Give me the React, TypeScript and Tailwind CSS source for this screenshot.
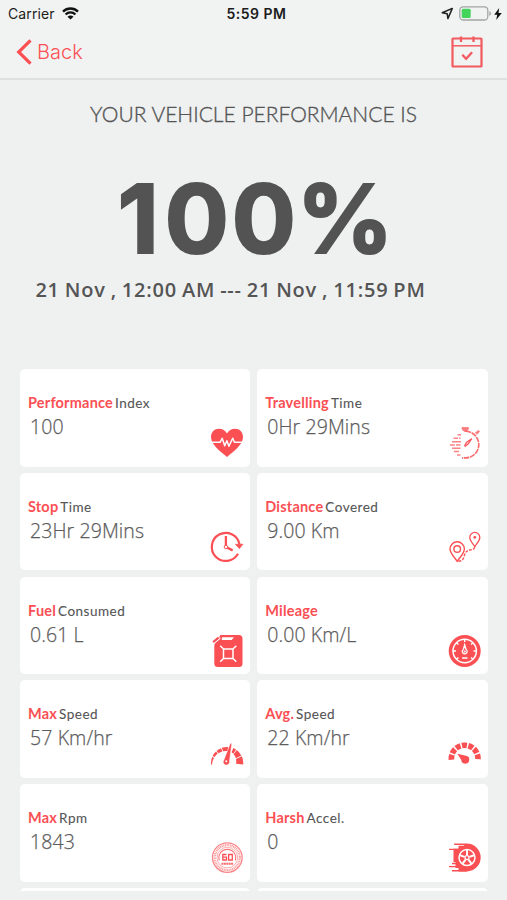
import type { ReactNode } from 'react';

const RED = '#fa5054';

function Svg({ children }: { children: ReactNode }) {
  return (
    <svg viewBox="0 0 32 32" width="32" height="32" fill="none" stroke={RED} className="overflow-visible">
      {children}
    </svg>
  );
}

const polar = (cx: number, cy: number, r: number, deg: number) => {
  const a = (deg * Math.PI) / 180;
  return `${(cx + r * Math.cos(a)).toFixed(2)} ${(cy - r * Math.sin(a)).toFixed(2)}`;
};

// Filled ring segment from angle a to angle b, with its own inner radius at each end.
const wedge = (cx: number, cy: number, ro: number, ra: number, rb: number, a: number, b: number) =>
  `M${polar(cx, cy, ro, a)}A${ro} ${ro} 0 0 1 ${polar(cx, cy, ro, b)}L${polar(cx, cy, rb, b)}A${rb} ${rb} 0 0 0 ${polar(cx, cy, ra, a)}Z`;

const HeartIcon = () => (
  <Svg>
    <path d="M16 30C10.500 25 0 18.200 0 10 0 5.200 3.400 1.800 8 1.800c3.400 0 6.400 1.800 8 4.800 1.600-3 4.600-4.800 8-4.800 4.600 0 8 3.400 8 8.200 0 8.200-10.500 15-16 20z" fill={RED} stroke="none" />
    <path d="M0 15.300h9l2.200-4 2.500 7.500 2.200-5 2 5.400 3.800-8 1.800 4.100H32" stroke="#fff" strokeWidth="1.500" strokeLinejoin="round" />
  </Svg>
);

const ClockIcon = () => (
  <Svg>
    <path d="M28.500 13A14 14 0 1 0 27 22.800" strokeWidth="2.200" />
    <path d="M24.500 13.300h7.300l-3.400 4.300z" fill={RED} strokeWidth=".8" />
    <path d="M14.900 5v11l6.800 3.400" strokeWidth="2.300" />
    <circle cx="14.900" cy="16" r="1.700" fill="#fff" strokeWidth="1" />
  </Svg>
);

const StopwatchIcon = () => (
  <Svg>
    <path d="M16.500 4.300a13.300 13.300 0 0 1 0 26.600h-3.500" strokeWidth="1.600" strokeDasharray="5.500 .8" opacity=".85" />
    <path d="M13 .5h6.400v1.600L17.500 4.300h-2.600L13 2.100zM26.500 5.600l3-2.200 1 1.400-2.700 2.500z" fill={RED} strokeWidth=".8" opacity=".75" />
    <path d="m15.600 18.700 2-3.600 5.200-3.500-3.500 5.200-3 2.500z" fill="#fbb" strokeWidth="1.100" />
    <path d="M8.500 7.700H12M4.500 11.200H9M10 11.200h1.500M3 14.700h9M.8 18h5M7 18h4.500M3 21.300h8.500M4.800 24.600H10M8 28h3.500" strokeWidth="1.500" opacity=".7" />
  </Svg>
);

const RouteIcon = () => (
  <Svg>
    <path d="M8.200 30.300C5.700 26.500 1 22.200 1 18a7.200 7.200 0 0 1 14.400 0c0 4.200-4.700 8.500-7.200 12.300z" strokeWidth="1.400" />
    <circle cx="8.200" cy="18" r="3.300" strokeWidth="1.400" />
    <path d="M25.800 15.600c-1.700-3-5-5.700-5-9.200a5 5 0 0 1 10 0c0 3.500-3.300 6.200-5 9.200z" strokeWidth="1.300" />
    <circle cx="25.800" cy="6.300" r="1.400" fill={RED} stroke="none" />
    <path d="M9.500 30.200c4-.3 4.800-2 5.500-4.500.8-3 2-6.200 5.500-6.700 2.500-.3 4.500-.4 5.200-2.800" strokeWidth="1.400" strokeDasharray="2.800 1.300" />
  </Svg>
);

const FuelIcon = () => (
  <Svg>
    <path d="m2.300 7.300 5.500-4.600" strokeWidth="2.700" />
    <path d="M9.500 0H28a3.500 3.500 0 0 1 3.500 3.500V28.500A3.500 3.500 0 0 1 28 32H6.800a3.500 3.500 0 0 1-3.500-3.500V11c0-1.600.5-2.600 1.600-3.500L8.500 4.500V1.200z" fill={RED} stroke="none" />
    <path d="m.8 10.200 8.700-7.200" stroke="#fff" strokeWidth="1" />
    <path d="M11 2.300h12l-2.400 2.800H10.700z" fill="#fff" stroke="none" />
    <path d="M12.500 14h9.500v9.500h-9.500zM12.500 14 9.200 10.700M22 14l3.300-3.300M22 23.500l3.300 3.300M12.500 23.500l-3.300 3.300" stroke="#fff" strokeWidth="1.500" />
  </Svg>
);

const MileageIcon = () => (
  <Svg>
    <circle cx="15.700" cy="16" r="16" fill={RED} stroke="none" />
    <circle cx="15.700" cy="16" r="11.700" stroke="#fff" strokeWidth="1.500" />
    <g stroke="#fff" strokeWidth="1.400">
      <path d="M15.700 4v3M4 16h3M27.500 16h-3M7.300 7.500l2.100 2.100M24.200 7.500l-2.100 2.100M7.300 24.500l2.100-2.100M24.200 24.500l-2.100-2.100M13.100 23h5.400" />
      <path d="M15.700 9.800 14.300 14.500a2.400 2.400 0 1 0 2.800 0z" fill={RED} strokeWidth="1.300" />
    </g>
    <circle cx="15.700" cy="16.600" r="1" fill="#fff" stroke="none" />
  </Svg>
);

const MaxSpeedIcon = () => (
  <Svg>
    <g fill={RED} stroke="none">
      <path d={wedge(16, 25, 16, 15, 14, 186, 158)} />
      <path d={wedge(16, 25, 16, 13.8, 13.200, 154, 134)} />
      <path d={wedge(16, 25, 16, 12.9, 12.400, 131, 112)} />
      <path d={wedge(16, 25, 16, 12.300, 12, 109, 86)} />
      <path d={wedge(16, 25, 16.200, 11.700, 11.100, 67, 56)} />
      <path d={wedge(16, 25, 16.200, 10.900, 10.100, 53, 28)} />
      <path d={wedge(16, 25, 16.300, 9.800, 9, 24, -5)} />
      <path d="m19.300 5.300 1.500.3-2.300 17.500a3.200 3.200 0 1 1-5.600-1.200z" stroke="#fff" strokeWidth=".5" />
    </g>
    <circle cx="15.300" cy="23.300" r="1" fill="#fff" stroke="none" />
  </Svg>
);

const AvgSpeedIcon = () => (
  <Svg>
    <g fill={RED} stroke="none">
      {[0, 1, 2, 3, 4, 5, 6].map((i) => (
        <path key={i} d={wedge(15.700, 20.600, 16.200, 10.500, 10.500, 185 - i * 27.700, 185 - i * 27.700 - 21.500)} />
      ))}
      <path d="m8.300 15.800 8.600 1.900a4 4 0 1 1-4.600 4.200z" />
    </g>
  </Svg>
);

const RpmIcon = () => (
  <Svg>
    <circle cx="16.300" cy="15.600" r="14.800" strokeWidth="1.300" opacity=".7" />
    <circle cx="16.300" cy="15.600" r="12.500" strokeWidth="2.200" strokeDasharray="1 .7" opacity=".6" />
    <circle cx="16.300" cy="15.600" r="10.300" strokeWidth=".8" opacity=".6" />
    <path d="M8.300 18.300a8.400 8.400 0 1 1 16 0" strokeWidth="1.100" opacity=".8" />
    <path d="M15.500 12.500h-3.700v5.500h3.700v-2.800h-3.500M17.600 12.500h3.700v5.500h-3.700z" strokeWidth="1.300" />
    <path d="M10.500 21.700h11.800" strokeWidth="2" strokeDasharray="2 .4" opacity=".85" />
  </Svg>
);

const TyreIcon = () => (
  <Svg>
    <path d="M17.800 2.200H5.200M10 7.400H0M8 21.500H3M10 24.600H0M18 28.700H3" strokeWidth="1.400" />
    <path d="M17.800 1.600a13.900 13.900 0 0 1 0 27.800H9.500v-3.500H6.500v-6H4.500V10.500H4.500V6.800h5v-3h5z" fill={RED} stroke="none" />
    <circle cx="18" cy="15.600" r="8" stroke="#fff" strokeWidth="1.500" />
    <circle cx="18" cy="15.600" r="2" stroke="#fff" strokeWidth="1.200" />
    {[90, 162, 234, 306, 18].map((a) => (
      <path key={a} d={`M${polar(18, 15.600, 2.500, a)}L${polar(18, 15.600, 7.500, a)}`} stroke="#fff" strokeWidth="2" />
    ))}
  </Svg>
);

type Metric = { strong: string; rest: string; value: string; icon: ReactNode };

const metrics: Metric[] = [
  { strong: 'Performance', rest: 'Index', value: '100', icon: <HeartIcon /> },
  { strong: 'Travelling', rest: 'Time', value: '0Hr 29Mins', icon: <StopwatchIcon /> },
  { strong: 'Stop', rest: 'Time', value: '23Hr 29Mins', icon: <ClockIcon /> },
  { strong: 'Distance', rest: 'Covered', value: '9.00 Km', icon: <RouteIcon /> },
  { strong: 'Fuel', rest: 'Consumed', value: '0.61 L', icon: <FuelIcon /> },
  { strong: 'Mileage', rest: '', value: '0.00 Km/L', icon: <MileageIcon /> },
  { strong: 'Max', rest: 'Speed', value: '57 Km/hr', icon: <MaxSpeedIcon /> },
  { strong: 'Avg.', rest: 'Speed', value: '22 Km/hr', icon: <AvgSpeedIcon /> },
  { strong: 'Max', rest: 'Rpm', value: '1843', icon: <RpmIcon /> },
  { strong: 'Harsh', rest: 'Accel.', value: '0', icon: <TyreIcon /> },
];

function Card({ strong, rest, value, icon }: Metric) {
  return (
    <div className="flex h-[97.500px] justify-between rounded-[5px] bg-white pr-[7px] pb-[7.500px] pl-2">
      <div className="pt-[24px]">
        <p className="flex items-baseline gap-[2px] font-['Lato',sans-serif] leading-5 whitespace-nowrap">
          <span className="text-[14.500px] font-bold tracking-[0.2px] text-[#fa5054]">{strong}</span>
          <span className="text-[13.500px] font-normal tracking-[0.5px] text-[#555] [-webkit-text-stroke:0.1px]">{rest}</span>
        </p>
        <p className="pl-[2px] font-['Open_Sans',sans-serif] text-[19.500px] leading-7 font-light tracking-[0.1px] text-[#5c5c5c] [-webkit-text-stroke:0.25px]">
          {value}
        </p>
      </div>
      <div className="self-end">{icon}</div>
    </div>
  );
}

function StatusBar() {
  return (
    <div className="grid h-[27px] grid-cols-3 items-center pr-[5px] pl-2 font-['Inter',sans-serif] text-[14px] text-[#1c1c1c]">
      <div className="flex items-center gap-[7px]">
        <span className="tracking-[0.1px]">Carrier</span>
        <svg width="17" height="13" viewBox="0 0 17 13" fill="none" stroke="#111" strokeWidth="2.300">
          <path d="M1 4.600a10.600 10.600 0 0 1 15 0M3.600 7.500a6.900 6.900 0 0 1 9.800 0" />
          <path d="M8.500 12.500 5.500 9.700a4.200 4.200 0 0 1 6 0z" fill="#111" stroke="none" />
        </svg>
      </div>
      <span className="pl-[3px] text-center font-semibold tracking-[0.500px] whitespace-nowrap">5:59 PM</span>
      <div className="flex items-center justify-end">
        <svg width="13" height="13" viewBox="0 0 13 13" fill="none" stroke="#222" strokeWidth="1.500" strokeLinejoin="round">
          <path d="M11.300 1.400 1.200 5.800l5 .9.700 4.900z" />
        </svg>
        <svg width="33" height="15" viewBox="0 0 33 15" fill="none" className="ml-[5px]">
          <rect x=".8" y=".8" width="28" height="13.200" rx="3.500" stroke="#a3a5a5" strokeWidth="1.300" />
          <rect x="2.700" y="2.700" width="9" height="9.400" rx="1.500" fill="#43d45b" />
          <path d="M30.300 5.200c2.200.6 2.200 3.900 0 4.500z" fill="#a3a5a5" />
        </svg>
        <svg width="8" height="12" viewBox="0 0 8 12" className="ml-[2px]">
          <path d="M5.200 0 .2 6.800h3L2.200 12 7.800 5h-3.300z" fill="#111" />
        </svg>
      </div>
    </div>
  );
}

export default function App() {
  return (
    <div className="flex h-[900px] w-[507px] flex-col overflow-hidden bg-[#eff1f1] text-[#555]">
      <header className="h-[80px] border-b-2 border-[#dfe1e1] bg-[#f1f3f3]">
        <StatusBar />
        <div className="flex h-[50px] items-center justify-between pr-6 pl-4">
          <div className="flex items-center gap-[5px]">
            <svg width="16" height="26" viewBox="0 0 16 26" fill="none" stroke="#fa5054" strokeWidth="3.200">
              <path d="M14.500 1.300 2.700 13l11.800 11.700" />
            </svg>
            <span className="font-['Inter',sans-serif] text-[20px] font-light text-[#fa5054]">Back</span>
          </div>
          <svg width="32" height="32" viewBox="0 0 32 32" fill="none" stroke="#f25a60" strokeWidth="2.200">
            <rect x="1.500" y="2.500" width="29" height="28" rx=".5" />
            <path d="M1.500 9.800h29" strokeWidth="1.500" />
            <path d="M10 .5v5.500M22.500 .5v5.500" strokeWidth="2.300" />
            <path d="m11.300 18.800 3.800 4 6-6.500" strokeWidth="2.300" />
          </svg>
        </div>
      </header>
      <section className="h-[289px] pt-[19px] text-center">
        <h1 className="font-['Lato',sans-serif] text-[21px] leading-[30px] font-[300] [-webkit-text-stroke:0.35px]">
          YOUR VEHICLE PERFORMANCE IS
        </h1>
        <p className="mt-[42px] pl-[4px] font-['Inter',sans-serif] text-[95px] leading-[96px] font-bold whitespace-nowrap text-[#535353] [-webkit-text-stroke:2.2px]">
          <span className="tracking-[6px]">1</span>
          <span className="tracking-[3px]">0</span>
          <span className="tracking-[1px]">0</span>%
        </p>
        <p className="mt-[8px] pr-[46px] font-['Open_Sans',sans-serif] text-[20px] leading-[30px] font-semibold tracking-[0.780px] whitespace-nowrap [word-spacing:-1px]">
          21 Nov , 12:00 AM --- 21 Nov , 11:59 PM
        </p>
      </section>
      <main className="grid h-[521.500px] grid-cols-2 content-start gap-x-[7px] gap-y-[6.300px] overflow-hidden pr-[19.500px] pl-5">
        {metrics.map((m) => (
          <Card key={m.strong + m.rest} {...m} />
        ))}
        <div className="h-[97.500px] rounded-[5px] bg-white" />
        <div className="h-[97.500px] rounded-[5px] bg-white" />
      </main>
    </div>
  );
}
